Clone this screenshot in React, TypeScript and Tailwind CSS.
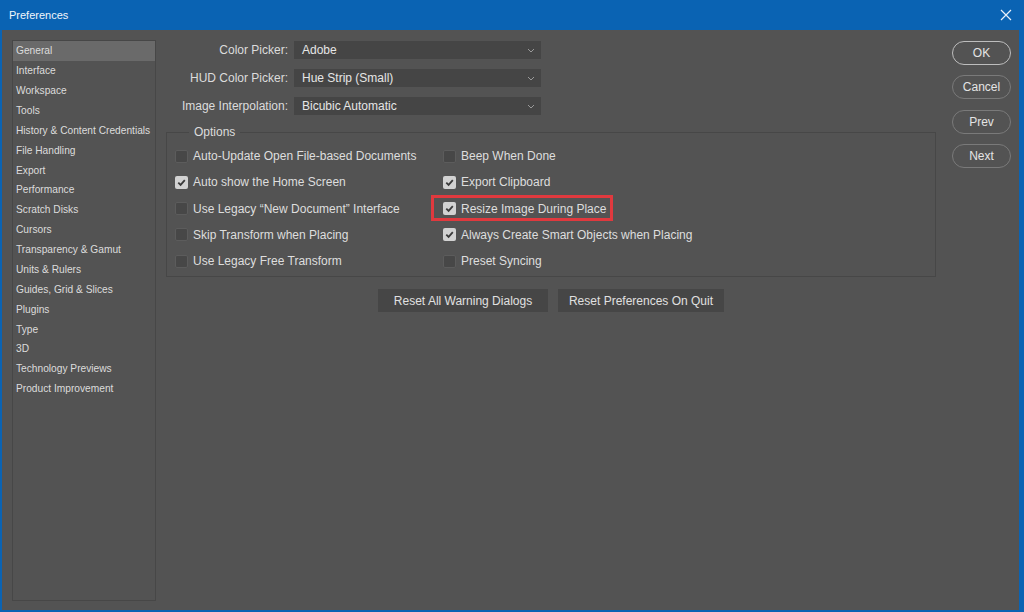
import React from "react";

const font = { fontFamily: '"Liberation Sans", Arial, sans-serif' };

const sidebarItems = [
  "General",
  "Interface",
  "Workspace",
  "Tools",
  "History & Content Credentials",
  "File Handling",
  "Export",
  "Performance",
  "Scratch Disks",
  "Cursors",
  "Transparency & Gamut",
  "Units & Rulers",
  "Guides, Grid & Slices",
  "Plugins",
  "Type",
  "3D",
  "Technology Previews",
  "Product Improvement",
];

function Checkbox({ checked }: { checked: boolean }) {
  return checked ? (
    <span className="flex h-[13px] w-[13px] shrink-0 items-center justify-center rounded-[2px] bg-[#d2d2d2]">
      <svg width="9" height="9" viewBox="0 0 9 9">
        <path d="M1.3 4.6 L3.6 6.9 L7.8 2.2" fill="none" stroke="#3a3a3a" strokeWidth="1.8" />
      </svg>
    </span>
  ) : (
    <span className="h-[13px] w-[13px] shrink-0 rounded-[2px] border border-[#5c5c5c] bg-[#474747]" />
  );
}

function Option({ label, checked, highlight }: { label: string; checked: boolean; highlight?: boolean }) {
  return (
    <div className="relative flex h-[26.25px] items-center gap-[5px]">
      <Checkbox checked={checked} />
      <span className="whitespace-nowrap text-[12px] text-[#dedede]">{label}</span>
      {highlight && (
        <span className="pointer-events-none absolute left-[-12px] top-[-1px] h-[26px] w-[182px] border-[3px] border-[#e0393e]" />
      )}
    </div>
  );
}

function Select({ label, value }: { label: string; value: string }) {
  return (
    <div className="flex h-[18px] items-center">
      <span className="w-[128px] whitespace-nowrap pr-[6px] text-right text-[12px] text-[#dcdcdc]">{label}</span>
      <div className="flex h-[18px] w-[247px] items-center justify-between bg-[#454545] pl-[8px] pr-[6px]">
        <span className="text-[12px] text-[#e6e6e6]">{value}</span>
        <svg width="8" height="5" viewBox="0 0 8 5">
          <path d="M1 1 L4 4 L7 1" fill="none" stroke="#9a9a9a" strokeWidth="1" />
        </svg>
      </div>
    </div>
  );
}

function SideButton({ label, primary }: { label: string; primary?: boolean }) {
  return (
    <div
      className={
        "flex h-[24px] w-[59px] items-center justify-center rounded-full border text-[12px] text-[#e4e4e4] " +
        (primary ? "border-[#bdbdbd]" : "border-[#7a7a7a]")
      }
    >
      {label}
    </div>
  );
}

export default function App() {
  return (
    <div className="flex h-[612px] w-[1024px] flex-col overflow-hidden bg-[#0a63b3]" style={font}>
      <div className="flex h-[30px] shrink-0 items-center justify-between pl-[9px] pr-[12px]">
        <span className="text-[11px] text-[#f2f6fb]">Preferences</span>
        <svg width="12" height="12" viewBox="0 0 12 12">
          <path d="M1 1 L11 11 M11 1 L1 11" stroke="#e8f0fa" strokeWidth="1.2" />
        </svg>
      </div>
      <div className="mb-[2px] ml-[2px] mr-[5px] flex min-h-0 flex-1 bg-[#535353] pb-[9px] pl-[10px] pr-[8px] pt-[10px]">
        {/* Sidebar */}
        <div className="w-[144px] shrink-0 border border-[#474747] py-0">
          {sidebarItems.map((item, i) => (
            <div
              key={item}
              className={
                "flex h-[19.88px] items-center whitespace-nowrap pl-[3px] text-[10.2px] text-[#dcdcdc] " +
                (i === 0 ? "bg-[#6a6a6a]" : "")
              }
            >
              {item}
            </div>
          ))}
        </div>

        {/* Main */}
        <div className="ml-[10px] flex w-[770px] shrink-0 flex-col">
          <div className="flex flex-col gap-[10px] pt-[1px]">
            <Select label="Color Picker:" value="Adobe" />
            <Select label="HUD Color Picker:" value="Hue Strip (Small)" />
            <Select label="Image Interpolation:" value="Bicubic Automatic" />
          </div>

          <fieldset className="mt-[8px] border border-[#474747] pb-[2px] pl-[8px] pt-[2px]">
            <legend className="ml-[14px] px-[5px] text-[12px] text-[#dcdcdc]">Options</legend>
            <div className="grid grid-cols-[268px_1fr]">
              <div className="flex flex-col">
                <Option label="Auto-Update Open File-based Documents" checked={false} />
                <Option label="Auto show the Home Screen" checked={true} />
                <Option label={"Use Legacy \u201CNew Document\u201D Interface"} checked={false} />
                <Option label="Skip Transform when Placing" checked={false} />
                <Option label="Use Legacy Free Transform" checked={false} />
              </div>
              <div className="flex flex-col">
                <Option label="Beep When Done" checked={false} />
                <Option label="Export Clipboard" checked={true} />
                <Option label="Resize Image During Place" checked={true} highlight />
                <Option label="Always Create Smart Objects when Placing" checked={true} />
                <Option label="Preset Syncing" checked={false} />
              </div>
            </div>
          </fieldset>

          <div className="mt-[12px] flex justify-center gap-[10px]">
            <div className="flex h-[23px] w-[170px] items-center justify-center bg-[#464646] text-[12px] text-[#e0e0e0]">
              Reset All Warning Dialogs
            </div>
            <div className="flex h-[23px] w-[166px] items-center justify-center bg-[#464646] text-[12px] text-[#e0e0e0]">
              Reset Preferences On Quit
            </div>
          </div>
        </div>

        {/* Right buttons */}
        <div className="ml-[16px] mt-[1px] flex flex-col gap-[10.4px]">
          <SideButton label="OK" primary />
          <SideButton label="Cancel" />
          <SideButton label="Prev" />
          <SideButton label="Next" />
        </div>
      </div>
    </div>
  );
}
